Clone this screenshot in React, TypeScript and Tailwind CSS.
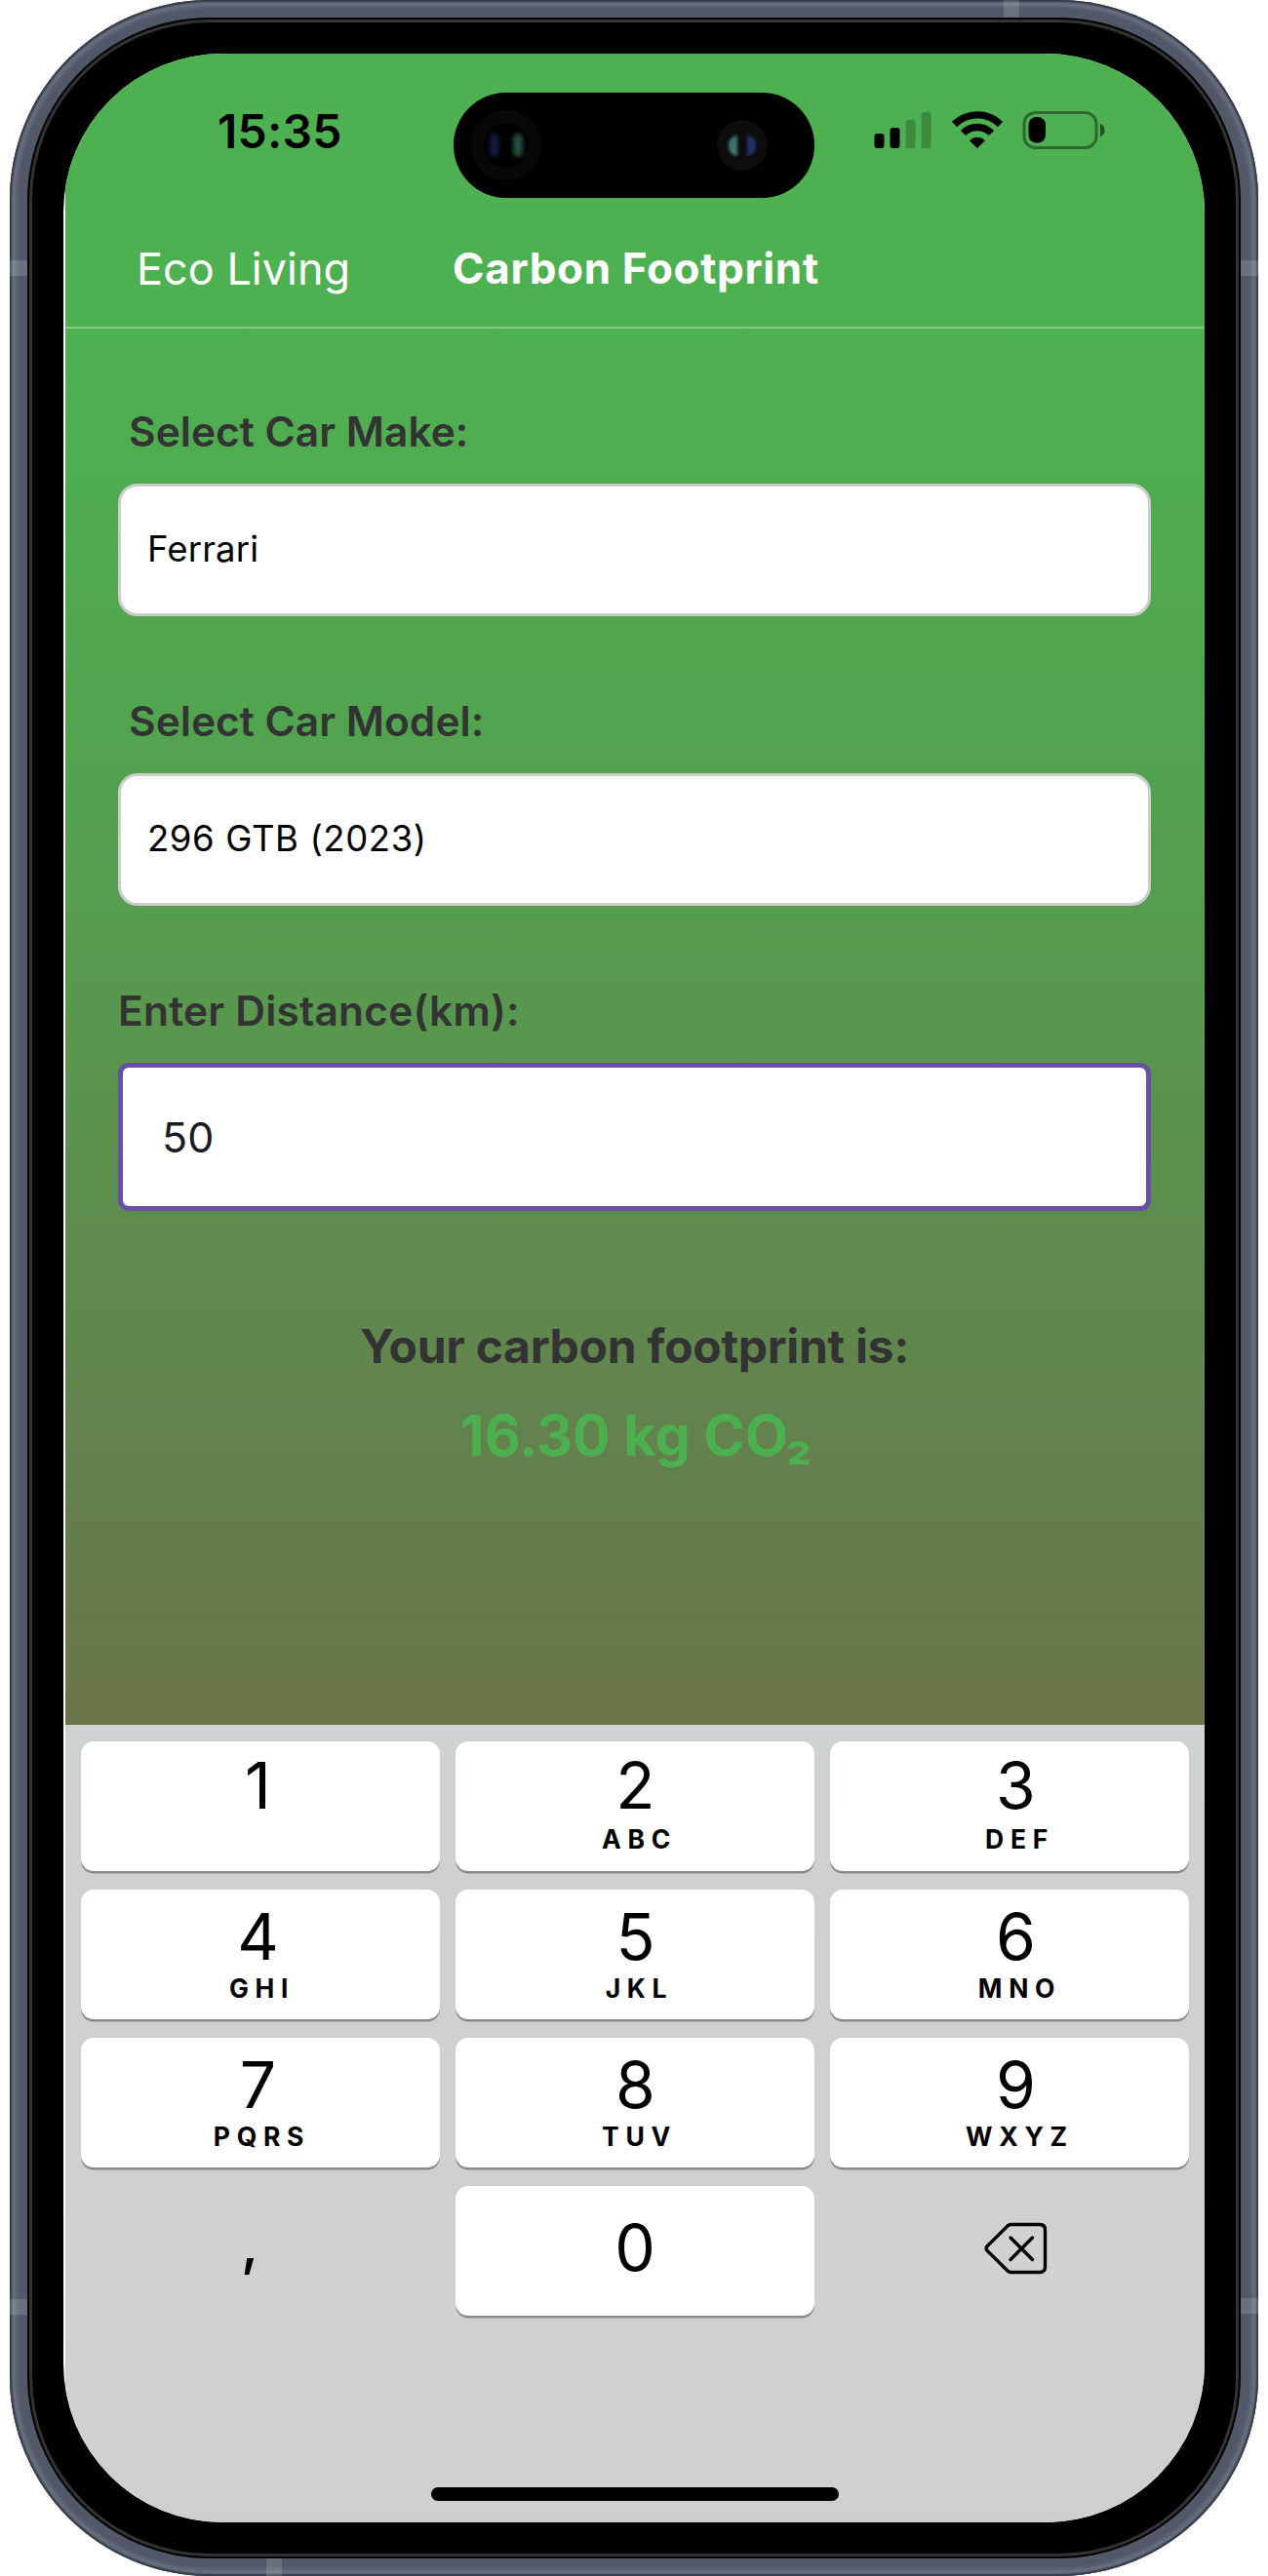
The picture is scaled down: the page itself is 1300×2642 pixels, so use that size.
import type { ReactNode } from "react";

const keys = [
  ["1", ""],
  ["2", "ABC"],
  ["3", "DEF"],
  ["4", "GHI"],
  ["5", "JKL"],
  ["6", "MNO"],
  ["7", "PQRS"],
  ["8", "TUV"],
  ["9", "WXYZ"],
];

const columnShift = ["pr-[5px]", "pl-px", "pl-[13px]"];

function SignalIcon() {
  return (
    <svg className="h-[38px] w-[60px]" viewBox="0 0 60 38">
      <rect x="0.5" y="23" width="10" height="15" rx="3" />
      <rect x="16.5" y="17" width="10" height="21" rx="3" />
      <rect x="32.5" y="9" width="10" height="29" rx="2.5" opacity="0.22" />
      <rect x="48.5" y="1" width="10" height="37" rx="2.5" opacity="0.22" />
    </svg>
  );
}

function WifiIcon() {
  return (
    <svg className="h-[38px] w-[52px]" viewBox="0 0 52 38" fill="none" stroke="#000">
      <path d="M2.5 13.5C15.5 0.7 36.5 0.7 49.5 13.5" strokeWidth="7.4" />
      <path d="M11.5 22.5C19.5 14.4 32.5 14.4 40.5 22.5" strokeWidth="7.4" />
      <path d="M26 38L18 30.2C22.5 25.6 29.5 25.6 34 30.2Z" fill="#000" stroke="none" />
    </svg>
  );
}

function BatteryIcon() {
  return (
    <svg className="h-[39px] w-[86px]" viewBox="0 0 86 39">
      <rect x="2" y="1.5" width="74" height="36" rx="11.5" fill="none" stroke="#000" strokeOpacity="0.4" strokeWidth="3" />
      <rect x="6.5" y="6" width="17.5" height="26.5" rx="8" />
      <path d="M80 13C83 14 84.500 16.500 84.500 19.500S83 25 80 26Z" opacity="0.55" />
    </svg>
  );
}

function BackspaceIcon() {
  return (
    <svg className="h-[54px] w-[66px]" viewBox="0 0 66 54" fill="none" stroke="#000" strokeWidth="3.4" strokeLinecap="round" strokeLinejoin="round">
      <path d="M27.5 2.5H57Q62.5 2.5 62.5 8V46Q62.5 51.5 57 51.5H27.5Q25.5 51.5 24 50L3.3 29.5Q1 27 3.3 24.5L24 4Q25.500 2.500 27.500 2.500Z" />
      <path d="M27 16L49.500 38.500M49.500 16L27 38.500" />
    </svg>
  );
}

function DynamicIsland() {
  return (
    <div className="absolute left-[400px] top-10 flex h-[108px] w-[370px] items-center justify-between rounded-full bg-black pl-[18px] pr-12">
      <div className="flex size-[72px] items-center justify-center rounded-full bg-[#080808]">
        <div className="flex size-[46px] items-center justify-between rounded-full bg-black px-[6px]">
          <span className="h-6 w-[10px] rounded-full bg-[#141a3c] blur-[2px]" />
          <span className="h-6 w-[10px] rounded-full bg-[#254a42] blur-[2px]" />
        </div>
      </div>
      <div className="flex size-[52px] items-center justify-between rounded-full bg-[#0d0d0d] px-3">
        <span className="h-[21px] w-[9px] rounded-l-full bg-[#3d756b] blur-[1.500px]" />
        <span className="h-[21px] w-[9px] rounded-r-full bg-[#22306c] blur-[1.500px]" />
      </div>
    </div>
  );
}

function Label({ children }: { children: ReactNode }) {
  return <div className="h-10 whitespace-nowrap text-[42.5px] font-semibold leading-10 text-[#333]">{children}</div>;
}

function Field({ children }: { children: ReactNode }) {
  return (
    <div className="flex h-[136px] items-center rounded-[20px] border-[3px] border-[#ccc] bg-white pb-[2px] pl-[27px] text-[36.5px] text-black">
      {children}
    </div>
  );
}

export default function App() {
  return (
    <main className="flex h-[2642px] w-[1300px] justify-center overflow-hidden bg-white font-['Inter',sans-serif]">
      <div className="relative h-[2642px] w-[1280px] rounded-[205px] bg-[#525868] p-[18px] shadow-[inset_0_0_2px_2px_#2f3641,inset_0_0_3px_6px_#6a7080,inset_0_0_4px_8px_#5b6172]">
        <span className="absolute left-0 top-[267px] h-4 w-[18px] bg-white/15" />
        <span className="absolute right-0 top-[267px] h-4 w-[18px] bg-white/15" />
        <span className="absolute left-0 top-[2358px] h-4 w-[18px] bg-white/15" />
        <span className="absolute right-0 top-[2357px] h-4 w-[18px] bg-white/15" />
        <span className="absolute left-[1019px] top-0 h-[18px] w-4 bg-white/15" />
        <span className="absolute bottom-0 left-[263px] h-[18px] w-4 bg-white/15" />
        <div className="h-full rounded-[187px] bg-black p-[2px]">
          <div className="h-full rounded-[185px] border-[3px] border-[#333] bg-black p-8">
            <div className="relative flex h-full flex-col overflow-hidden rounded-[163px] bg-white pl-[2px]">
              <DynamicIsland />
              <header className="h-[282px] shrink-0 border-b-2 border-[#88ca8a] bg-[#4eb151]">
                <div className="flex h-[156px] items-center pl-[156px] pt-[1px]">
                  <span className="w-[673px] pt-[2px] text-[48px] font-semibold leading-none tracking-[0.2px] text-black">15:35</span>
                  <div className="flex items-start gap-[20px]">
                    <SignalIcon />
                    <WifiIcon />
                    <BatteryIcon />
                  </div>
                </div>
                <div className="flex h-[124px] pl-[73px] pt-[40px] text-white">
                  <span className="w-[324px] text-[45px] leading-[50px]">Eco Living</span>
                  <span className="text-[44px] font-bold leading-[48px] tracking-[0.65px]">Carbon Footprint</span>
                </div>
              </header>
              <section className="flex h-[1432px] shrink-0 flex-col bg-[linear-gradient(#4eb151_0%,#4fac50_10%,#549f4f_38%,#5b934e_55%,#60874e_72%,#657d4c_86%,#6a754a_100%)] pl-[54px] pr-[55px] pt-[86px]">
                <div className="pl-[11px]">
                  <Label>Select Car Make:</Label>
                </div>
                <div className="mt-[33px]">
                  <Field>
                    <span className="tracking-[0.15px]">Ferrari</span>
                  </Field>
                </div>
                <div className="mt-[88px] pl-[11px]">
                  <Label>Select Car Model:</Label>
                </div>
                <div className="mt-[33px]">
                  <Field>
                    <span className="tracking-[0.6px]">296 GTB (2023)</span>
                  </Field>
                </div>
                <div className="mt-[88px]">
                  <Label>
                    <span className="tracking-[0.2px]">Enter Distance(km):</span>
                  </Label>
                </div>
                <div className="mt-[33px] flex h-[152px] items-center rounded-[11px] border-[5px] border-[#6750a4] bg-white pl-10 text-[43px] text-[#1c1b1f]">
                  50
                </div>
                <div className="mt-[110px] flex flex-col items-center whitespace-nowrap">
                  <span className="text-[48px] font-bold leading-[58px] tracking-[-0.3px] text-[#333]">Your carbon footprint is:</span>
                  <span className="mt-[28px] pl-[3px] text-[57.5px] font-bold leading-[68px] tracking-[-0.05px] text-[#4caf50]">16.30 kg CO₂</span>
                </div>
              </section>
              <section className="relative grow bg-[linear-gradient(#ced2d1,#ced1d0_18%,#cfd0d2_36%,#d1d0d2_70%,#d1ced1)] px-4 pt-[17px]">
                <div className="grid grid-cols-3 gap-x-4 gap-y-[19px]">
                  {keys.map(([digit, letters], i) => (
                    <div
                      key={digit}
                      className={`flex h-[133px] flex-col items-center rounded-[13px] bg-white text-black shadow-[0_2.500px_0_#898a8c] ${i < 3 ? "pt-[21px]" : "pt-[24px]"} ${columnShift[i % 3]}`}
                    >
                      <span className="text-[66px] leading-[48px]">{digit}</span>
                      <span className={`pl-[8px] text-[26.5px] font-bold leading-7 tracking-[6.700px] ${i < 3 ? "mt-[17px]" : "mt-[15px]"}`}>{letters}</span>
                    </div>
                  ))}
                  <div className="flex h-[133px] items-center justify-center pb-[18px] pr-[22px] text-[60px] font-medium leading-none text-black">,</div>
                  <div className="flex h-[133px] items-center justify-center rounded-[13px] bg-white pb-[7px] text-[66px] leading-none text-black shadow-[0_2.500px_0_#898a8c]">0</div>
                  <div className="flex h-[133px] items-center justify-center pb-[6px] pl-[14px]">
                    <BackspaceIcon />
                  </div>
                </div>
                <div className="absolute bottom-[22px] left-[375px] h-[14px] w-[418px] rounded-full bg-black" />
              </section>
            </div>
          </div>
        </div>
      </div>
    </main>
  );
}
